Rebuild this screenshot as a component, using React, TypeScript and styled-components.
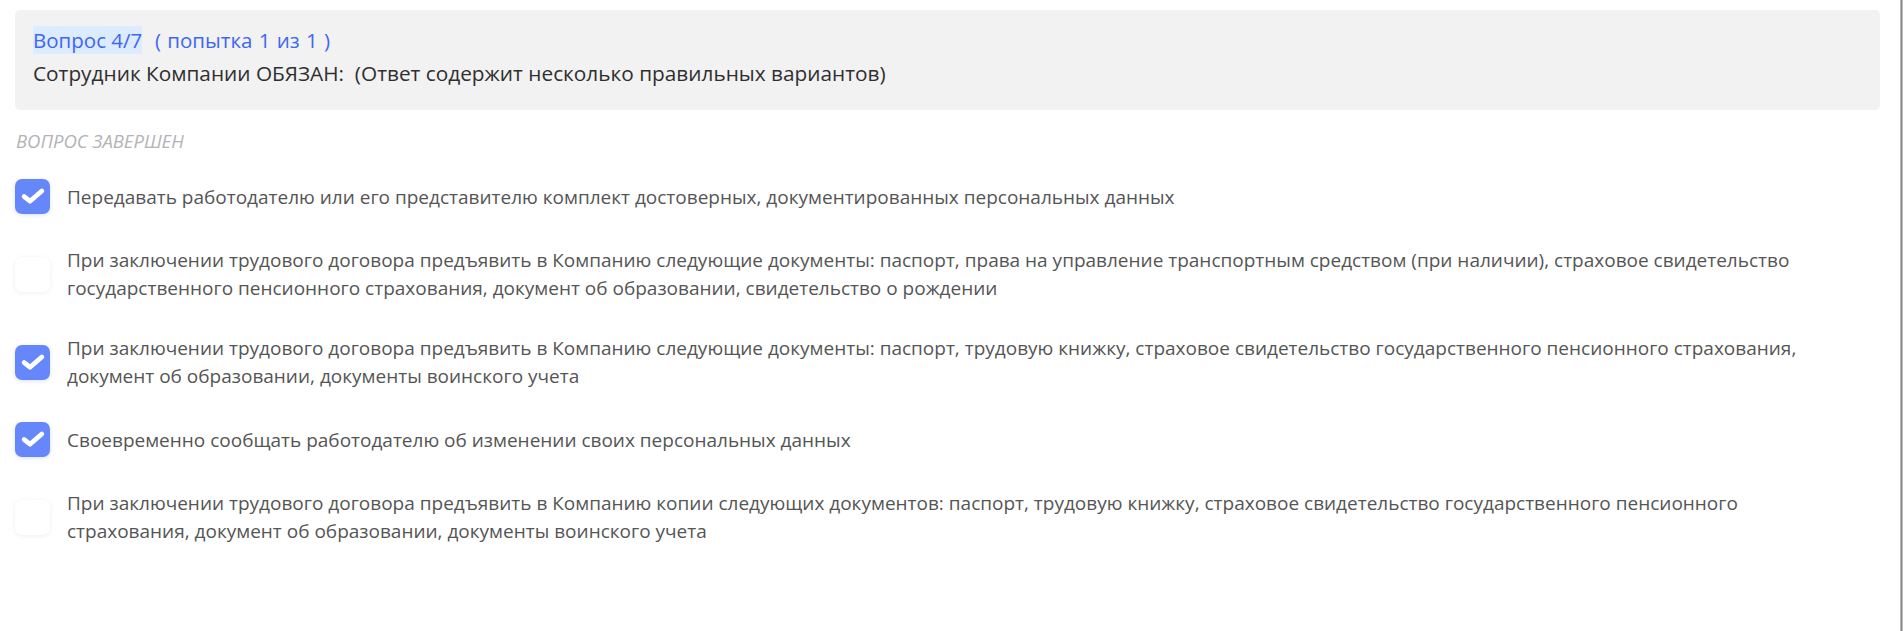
import React from "react";
import styled, { createGlobalStyle } from "styled-components";

const GlobalStyle = createGlobalStyle`
  html, body {
    margin: 0;
    padding: 0;
    background: #ffffff;
  }
  body {
    font-family: "Open Sans", "Noto Sans", sans-serif;
  }
`;

const Frame = styled.div`
  display: flex;
  min-height: 100vh;
  width: 100%;
`;

const Content = styled.main`
  flex: 1;
  padding: 10px 20px 0 15px;
  min-width: 0;
`;

const WindowEdge = styled.div`
  width: 3px;
  flex-shrink: 0;
  background: linear-gradient(to right, #b4b4b4 0 1px, #8e8e8e 1px 2px, #b8b8b8 2px);
`;

const QuestionCard = styled.section`
  background: #f2f2f2;
  border-radius: 5px;
  padding: 17px 18px 23px;
  display: flex;
  flex-direction: column;
  gap: 6px;
`;

const QuestionMeta = styled.div`
  font-size: 20.5px;
  line-height: 27px;
  color: #3d68f2;
  white-space: pre;
  word-spacing: 1px;
`;

const Highlight = styled.span`
  background: #dcebfd;
  word-spacing: 0;
`;

const QuestionTitle = styled.div`
  font-size: 20.8px;
  line-height: 27px;
  color: #2f2f2f;
  white-space: pre;
`;

const Status = styled.div`
  margin: 19px 0 0 1px;
  font-size: 18.5px;
  line-height: 24px;
  font-style: italic;
  text-transform: uppercase;
  color: #b3b3b8;
`;

const Options = styled.ul`
  list-style: none;
  margin: 26px 0 0;
  padding: 0;
  display: flex;
  flex-direction: column;
  gap: 32px;
`;

const OptionRow = styled.li`
  display: flex;
  align-items: center;
  gap: 17px;
  min-height: 35px;
`;

const Box = styled.span<{ $checked: boolean }>`
  flex-shrink: 0;
  width: 35px;
  height: 35px;
  border-radius: 7px;
  display: flex;
  align-items: center;
  justify-content: center;
  background: ${(p) => (p.$checked ? "#6687f9" : "#ffffff")};
  box-shadow: ${(p) =>
    p.$checked
      ? "0 1px 4px rgba(60, 90, 200, 0.18)"
      : "0 1px 5px rgba(0, 0, 0, 0.07)"};

  svg {
    display: block;
    flex-shrink: 0;
  }
`;

const OptionText = styled.span`
  font-size: 19px;
  line-height: 28px;
  color: #555555;
  max-width: 1763px;
`;

const Check = () => (
  <svg width="26" height="19" viewBox="0 0 26 19" fill="none">
    <path
      d="M4.2 9.6 L10 14.2 L21.8 4"
      stroke="#ffffff"
      strokeWidth="4.8"
      strokeLinecap="round"
      strokeLinejoin="round"
    />
  </svg>
);

const options: { text: string; checked: boolean }[] = [
  {
    text: "Передавать работодателю или его представителю комплект достоверных, документированных персональных данных",
    checked: true,
  },
  {
    text: "При заключении трудового договора предъявить в Компанию следующие документы: паспорт, права на управление транспортным средством (при наличии), страховое свидетельство государственного пенсионного страхования, документ об образовании, свидетельство о рождении",
    checked: false,
  },
  {
    text: "При заключении трудового договора предъявить в Компанию следующие документы: паспорт, трудовую книжку, страховое свидетельство государственного пенсионного страхования, документ об образовании, документы воинского учета",
    checked: true,
  },
  {
    text: "Своевременно сообщать работодателю об изменении своих персональных данных",
    checked: true,
  },
  {
    text: "При заключении трудового договора предъявить в Компанию копии следующих документов: паспорт, трудовую книжку, страховое свидетельство государственного пенсионного страхования, документ об образовании, документы воинского учета",
    checked: false,
  },
];

export default function App() {
  return (
    <>
      <GlobalStyle />
      <Frame>
        <Content>
          <QuestionCard>
            <QuestionMeta>
              <Highlight>Вопрос 4/7</Highlight>{"  ( попытка 1 из 1 )"}
            </QuestionMeta>
            <QuestionTitle>
              {"Сотрудник Компании ОБЯЗАН:  (Ответ содержит несколько правильных вариантов)"}
            </QuestionTitle>
          </QuestionCard>
          <Status>Вопрос завершен</Status>
          <Options>
            {options.map((o, i) => (
              <OptionRow key={i}>
                <Box $checked={o.checked}>{o.checked && <Check />}</Box>
                <OptionText>{o.text}</OptionText>
              </OptionRow>
            ))}
          </Options>
        </Content>
        <WindowEdge />
      </Frame>
    </>
  );
}
